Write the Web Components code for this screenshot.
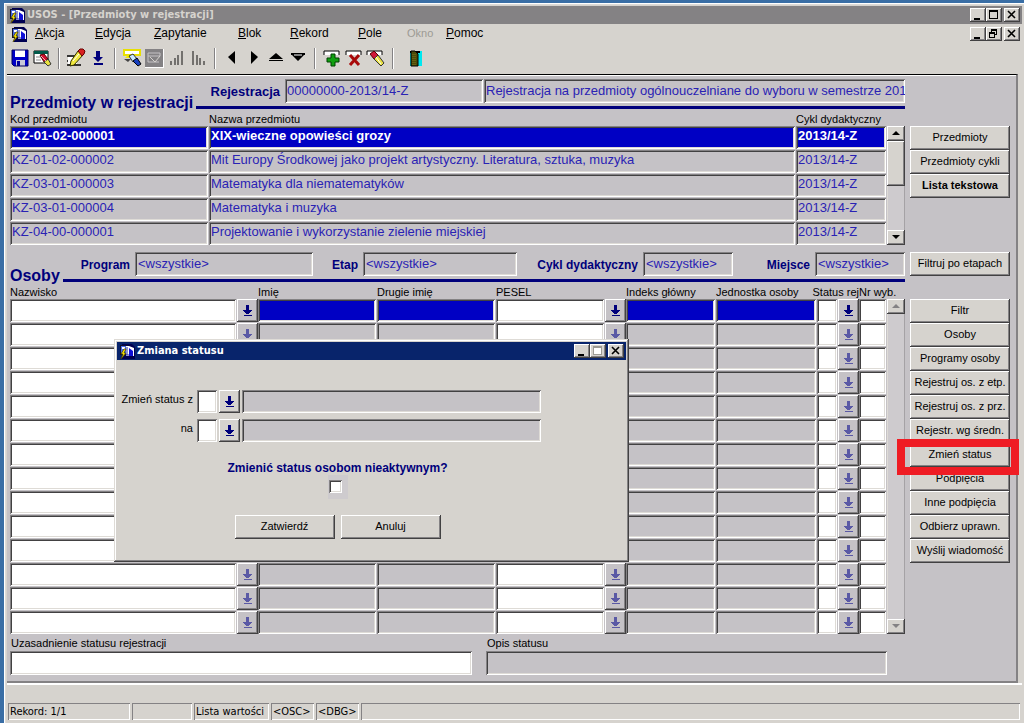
<!DOCTYPE html>
<html lang="pl">
<head>
<meta charset="utf-8">
<title>USOS - [Przedmioty w rejestracji]</title>
<style>
  html { height: 100%; }
  body {
    margin: 0; min-height: 100%; display: flex; background: #3a6ea5;
    font: 11px/14px "Liberation Sans", Arial, sans-serif; color: #000;
    --face: #d6d3ce; --panel: #c5c2c6; --navy: #00007b; --ink: #2a22b4; --pick: #0000c4;
    --ui: "DejaVu Sans Condensed", "DejaVu Sans", sans-serif;
  }
</style>
</head>
<body>
<usos-window></usos-window>

<script>
const SUNK = 'box-shadow: inset 1px 1px #848284, inset -1px -1px #fff, inset 2px 2px #424142, inset -2px -2px #dedbd6;';
const RAISED = 'box-shadow: inset -1px -1px #424142, inset 1px 1px #fff, inset -2px -2px #848284;';

const define = (name, render) => customElements.define(name, class extends HTMLElement {
  connectedCallback() {
    if (this.shadowRoot) return;
    this.attachShadow({ mode: 'open' }).innerHTML =
      '<style>*{box-sizing:border-box} :host{display:block;box-sizing:border-box} button{font:inherit;color:inherit;margin:0;padding:0;border:0;background:none} svg{display:block}</style>' + render(this);
  }
});
const attr = (el, n, d = '') => el.getAttribute(n) ?? d;

/* application glyph: a form window with a lightning bolt */
define('app-icon', () => `
  <style>:host{width:17px;height:17px;flex:none}</style>
  <svg width="17" height="17" viewBox="0 0 17 17" aria-hidden="true">
    <path d="M3 1h10l3 3v12H3z" fill="#000052"/><path d="M1 2h8v10H1z" fill="#101030"/>
    <path d="M2 3h6v8H2z" fill="#4a6ae0"/><path d="M7 3h3l5 2v8H7z" fill="#fff"/>
    <path d="M10 5l4 3v5h-4z" fill="#1010d8"/><path d="M8 4v8M7 12h3" stroke="#2028a0"/>
    <path d="M3 4h3v2H3z" fill="#fff"/>
    <path d="M5 6 2 11h2l-2 5 5-6H5l2-4z" fill="#ffe800" stroke="#403800" stroke-width=".7"/>
  </svg>`);

const CTRL = {
  min: ['Minimalizuj', '<path d="M4 10h6v2H4z" fill="#000"/>'],
  max: ['Maksymalizuj', '<path d="M3 2h9v9H3z M4 4v6h7V4z" fill="#000" fill-rule="evenodd"/>'],
  maxoff: ['Maksymalizuj', '<path d="M4 3h8v8H4z" fill="#fff"/><path d="M3 2h9v9H3z M4 4v6h7V4z" fill="#9c9a94" fill-rule="evenodd"/>'],
  restore: ['Przywróć', '<path d="M5 2h6v6H9V7h1V4H6v1H5z M3 5h6v6H3z M4 7v3h4V7z" fill="#000" fill-rule="evenodd"/>'],
  close: ['Zamknij', '<path d="M4 3l7 7M11 3l-7 7" stroke="#000" stroke-width="1.6"/>']
};
define('window-controls', el => `
  <style>:host{display:flex;flex:none} button{width:16px;height:14px;background:var(--face);${RAISED}} button:last-child{margin-left:2px}</style>
  ${attr(el, 'kinds').split(' ').map(k => `<button type="button" aria-label="${CTRL[k][0]}"><svg width="16" height="14" viewBox="0 0 16 14">${CTRL[k][1]}</svg></button>`).join('')}`);

define('title-bar', el => `
  <style>
    :host{display:flex;align-items:center;height:18px;padding:0 2px;gap:1px;background:var(--bar,#848284);color:var(--bar-ink,#d6d3ce)}
    h1{margin:0;flex:1;font:bold 11px/16px var(--ui);white-space:nowrap}
  </style>
  <app-icon></app-icon><h1>${attr(el, 'text')}</h1><window-controls kinds="${attr(el, 'kinds')}"></window-controls>`);

define('menu-bar', () => `
  <style>
    :host{display:flex;align-items:center;height:20px;padding:0 2px 0 4px}
    nav{flex:1;display:grid;grid-template-columns:60px 59px 84px 52px 68px 49px 39px auto;margin-left:7px;font-size:12px;line-height:18px;padding-bottom:2px}
    button{text-align:left;justify-self:start} button:disabled{color:#9c9a94;font-size:11px}
  </style>
  <app-icon></app-icon>
  <nav>${['Akcja', 'Edycja', 'Zapytanie', 'Blok', 'Rekord', 'Pole', 'Okno', 'Pomoc'].map(t =>
    t === 'Okno' ? `<button type="button" disabled>${t}</button>` : `<button type="button"><u>${t[0]}</u>${t.slice(1)}</button>`).join('')}</nav>
  <window-controls kinds="min restore close"></window-controls>`);

const TOOLS = {
  save: ['Zapisz', '<path d="M2 2h16v16H4l-2-2z" fill="#0000c8"/><path d="M5 2h10v7H5z" fill="#fff"/><path d="M6 12h9v6H6z" fill="#c8c8d8"/><path d="M7 13h3v5H7z" fill="#0000a0"/><path d="M2 2h16v16H4l-2-2z" fill="none" stroke="#000060"/>'],
  clear: ['Wyczyść formularz', '<path d="M2 3h14v12H2z" fill="#fff" stroke="#000"/><path d="M2 3h14v3H2z" fill="#005a4a"/><path d="M4 9h8M4 12h5" stroke="#888"/><path d="M8 7l4-1 4 5-4 3z" fill="#d01030" stroke="#500"/><path d="M12 14l4-3 3 5-3 2z" fill="#e8e040" stroke="#333"/><path d="M9 8l5 5" stroke="#f8b0b8"/>'],
  edit: ['Edytuj', '<path d="M1 8h9M1 17h14M1 13h4" stroke="#000" stroke-width="1.5"/><path d="M2 9h9v7H2z" fill="#fff"/><path d="M12 3l5 4-9 10-4 1 1-5z" fill="#f0e840" stroke="#303000"/><path d="M12 3l2-2h3l2 2-1 3-2 2z" fill="#d82020" stroke="#600"/><path d="M7 13l6-7" stroke="#fff"/>'],
  list: ['Lista wartości', '<path d="M8 3h4v6h3l-5 5-5-5h3zM6 15h9v2H6z" fill="#00007b"/>'],
  query: ['Wprowadź zapytanie', '<path d="M2 2h16v5H2z" fill="#fff" stroke="#e8e000" stroke-width="2"/><path d="M2 11h7l-3 3z" fill="#444"/><path d="M3 10h6l-1-3h-2" fill="#f0e800"/><path d="M7 8l4-2 4 5-4 3z" fill="#c8e8ff" stroke="#333"/><path d="M11 13l4-3 4 6-3 2z" fill="#1840c0" stroke="#000"/>'],
  run: ['Wykonaj zapytanie', '<path d="M1 1h19v19H1z" fill="#fff"/><path d="M1 1h18v18H1z" fill="#848284"/><path d="M4 5h12v3H4zM4 8v6h11" fill="none" stroke="#c6c3c6"/><path d="M6 9l5 5 5-6" fill="none" stroke="#d6d3ce"/>', 1],
  asc: ['Sortuj rosnąco', '<path d="M5 13v4M9 10v7M12 7v10M16 3v14" stroke="#73716e" stroke-width="2"/>', 1],
  desc: ['Sortuj malejąco', '<path d="M5 3v14M9 7v10M12 10v7M16 13v4" stroke="#73716e" stroke-width="2"/>', 1],
  prevb: ['Poprzedni blok', '<path d="M13 3v13L6 9z" fill="#000"/>'],
  nextb: ['Następny blok', '<path d="M7 3v13l7-7z" fill="#000"/>'],
  prev: ['Poprzedni rekord', '<path d="M3 11h14l-7-6zM3 12h14v1H3z" fill="#000"/>'],
  next: ['Następny rekord', '<path d="M3 5h14v2h-1l-6 6-6-6H3z" fill="#000"/><path d="M6 7h8" stroke="#fff"/>'],
  add: ['Wstaw rekord', '<path d="M2 3h15v4H2z" fill="#fff"/><path d="M2 7V3h15v4" fill="none" stroke="#000"/><path d="M9 6h4v4h4v4h-4v4H9v-4H5v-4h4z" fill="#10a010" stroke="#004000"/>'],
  del: ['Usuń rekord', '<path d="M2 3h15v4H2z" fill="#fff"/><path d="M2 7V3h15v4" fill="none" stroke="#000"/><path d="M6 7l9 10M15 7L6 17" stroke="#a80808" stroke-width="3"/>'],
  wipe: ['Wyczyść rekord', '<path d="M1 3h15v4H1z" fill="#fff"/><path d="M1 7V3h15v4" fill="none" stroke="#000"/><path d="M4 6l4-3 4 4-4 4z" fill="#d01838" stroke="#500"/><path d="M8 11l4-4 6 8-3 3z" fill="#e8e040" stroke="#333"/><path d="M10 9l5 7" stroke="#fff"/>'],
  exit: ['Wyjście', '<path d="M4 3h12v15H4z" fill="#00e8f0"/><path d="M4 3h10v2H4z" fill="#000"/><path d="M5 3h4l3 3v12H5z" fill="#4a4a08" stroke="#000"/><path d="M7 6v12M9 6v12" stroke="#807820" stroke-dasharray="1 1"/>']
};
define('tool-bar', el => `
  <style>
    :host{display:flex;align-items:center;height:30px;padding:0 0 2px 2px}
    div{display:flex} button{width:22px;height:22px;display:grid;place-items:center}
    i{width:2px;height:21px;margin:0 5px;background:#848284;border-right:1px solid #fff}
    div:last-child{padding-left:6px}
  </style>
  ${[['save', 'clear'], ['edit', 'list'], ['query', 'run', 'asc', 'desc'], ['prevb', 'nextb', 'prev', 'next'], ['add', 'del', 'wipe'], ['exit']]
    .map(g => `<div>${g.map(k => `<button type="button" aria-label="${TOOLS[k][0]}"${TOOLS[k][2] ? ' disabled' : ''}><svg width="20" height="20" viewBox="0 0 20 20">${TOOLS[k][1]}</svg></button>`).join('')}</div>`).join('<i></i>')}`);

define('push-button', el => `
  <style>
    :host{position:relative}
    button{display:block;width:100%;height:24px;padding-bottom:2px;background:var(--face);${RAISED}}
    :host([strong]) button{font-weight:bold}
    :host([marked])::after{content:"";position:absolute;z-index:1;inset:-4px -9px -8px -13px;border:8px solid #ef1c24}
  </style><button type="button"><slot></slot></button>`);

define('lov-button', el => `
  <style>
    button{display:grid;place-items:center;width:21px;height:100%;min-height:23px;background:var(--lov,var(--panel));${RAISED} fill:var(--navy)}
    :host([off]) svg{fill:#5a59a5}
  </style><button type="button" aria-label="Lista wartości"><svg width="9" height="12" viewBox="0 0 9 12" shape-rendering="crispEdges"><path d="M3 0h3v5h3v1H8v1H7v1H6v1H3V8H2V7H1V6H0V5h3zM1 10h8v1H1z"/></svg></button>`);

define('scroll-bar', el => `
  <style>
    :host{display:flex;flex-direction:column;width:18px;background:#cecbce;box-shadow:inset 1px 0 #dedbd6,inset -1px 0 #a5a2a5}
    button{width:18px;height:15px;background:var(--face);display:grid;place-items:center;${RAISED}}
    div{flex:1} b{display:block;height:45px;background:var(--face);${RAISED}}
    svg{fill:#000} :host([off]) svg{fill:#848284}
  </style>
  <button type="button" aria-label="W górę"><svg width="8" height="5" viewBox="0 0 8 5"><path d="M0 4h8L4 0z"/></svg></button>
  <div>${el.hasAttribute('off') ? '' : '<b></b>'}</div>
  <button type="button" aria-label="W dół"><svg width="8" height="5" viewBox="0 0 8 5"><path d="M0 0h8L4 4z"/></svg></button>`);

define('form-field', el => `
  <style>
    :host{display:flex;gap:5px;align-items:center;justify-content:flex-end}
    label{font-weight:bold;color:var(--navy);font-size:12px;white-space:nowrap;padding-top:2px}
    :host([big]) label{font-size:13px}
    input{width:var(--w,100%);height:24px;min-width:0;border:0;border-radius:0;margin:0;padding:0 2px 2px 3px;background:var(--panel);color:var(--ink);font:13px/18px "Liberation Sans",Arial,sans-serif;${SUNK}}
    :host([big]) input{padding:0 0 2px 2px}
    :host([stack]){flex-direction:column;align-items:stretch;gap:1px}
    :host([stack]) label{font-size:11px;font-weight:normal;color:#000;padding:0 1px}
    :host([white]) input{background:#fff}
  </style>
  ${attr(el, 'label') ? `<label for="f">${attr(el, 'label')}</label>` : ''}<input id="f" value="${attr(el, 'value')}" ${attr(el, 'label') ? '' : 'aria-label="Opis rejestracji"'} ${el.hasAttribute('white') ? '' : 'readonly'}>`);

define('section-title', () => `
  <style>
    :host{display:flex;align-items:flex-end;gap:3px;margin-top:-9px}
    h2{margin:0;font-size:16px;line-height:18px;color:var(--navy)}
    i{flex:1;height:3px;margin-bottom:3px;background:var(--navy)}
  </style><h2><slot></slot></h2><i></i>`);

const TABLE = `
  :host{display:flex;min-width:0}
  table{flex:1;min-width:0;table-layout:fixed;border-collapse:collapse;width:100%}
  th{height:14px;padding:0;font-weight:normal;text-align:left;white-space:nowrap;line-height:14px}
  td{height:24px;padding:0 1px 1px 0}
  scroll-bar{margin:14px 0 1px}`;

define('course-table', () => `
  <style>${TABLE}
    td>div{height:23px;padding-left:2px;font-size:13px;line-height:20px;color:var(--ink);white-space:nowrap;overflow:hidden;${SUNK}}
    tr[aria-selected] div{background:var(--pick);color:#fff;font-weight:bold}
  </style>
  <table><colgroup><col style="width:199px"><col><col style="width:91px"></colgroup>
  <thead><tr><th>Kod przedmiotu</th><th>Nazwa przedmiotu</th><th>Cykl dydaktyczny</th></tr></thead>
  <tbody>${[
    ['KZ-01-02-000001', 'XIX-wieczne opowieści grozy'],
    ['KZ-01-02-000002', 'Mit Europy Środkowej jako projekt artystyczny. Literatura, sztuka, muzyka'],
    ['KZ-03-01-000003', 'Matematyka dla niematematyków'],
    ['KZ-03-01-000004', 'Matematyka i muzyka'],
    ['KZ-04-00-000001', 'Projektowanie i wykorzystanie zielenie miejskiej']
  ].map((r, i) => `<tr${i ? '' : ' aria-selected="true"'}>${[...r, '2013/14-Z'].map(c => `<td><div>${c}</div></td>`).join('')}</tr>`).join('')}</tbody></table>
  <scroll-bar></scroll-bar>`);

const PERSON = [
  ['Nazwisko', 'w'], ['', 'l'], ['Imię', 'g'], ['Drugie imię', 'g'], ['PESEL', 'w'], ['', 'l'],
  ['Indeks główny', 'g'], ['Jednostka osoby', 'g'], ['Status rej', 'w'], ['', 'l'], ['Nr wyb.', 'w']
];
define('people-table', () => `
  <style>${TABLE}
    input{display:block;width:100%;height:23px;border:0;border-radius:0;margin:0;padding:0 3px;font:inherit;background:#fff;${SUNK}}
    input[readonly]{background:var(--panel)}
    tr:first-child input[readonly]{background:var(--pick)}
    .end{display:flex;justify-content:flex-end}
  </style>
  <table><colgroup><col>${[21, 119, 119, 109, 21, 90, 101, 21, 21, 28].map(w => `<col style="width:${w}px">`).join('')}</colgroup>
  <thead><tr>${PERSON.map(([t], i) => i === 8 ? `<th colspan="2"><div class="end">${t}</div></th>` : i === 9 ? '' : `<th>${t}</th>`).join('')}</tr></thead>
  <tbody>${Array.from({ length: 14 }, (_, r) => `<tr>${PERSON.map(([t, k]) =>
    k === 'l' ? `<td><lov-button${r ? ' off' : ''}></lov-button></td>` : `<td><input aria-label="${t}"${k === 'g' ? ' readonly' : ''}></td>`).join('')}</tr>`).join('')}</tbody></table>
  <scroll-bar off></scroll-bar>`);

define('status-dialog', () => `
  <style>
    :host{background:var(--face);padding:3px;width:515px;--bar:#08246b;--bar-ink:#fff;box-shadow:inset -1px -1px #424142,inset 1px 1px #dedbd6,inset -2px -2px #848284,inset 2px 2px #fff}
    form{display:flex;flex-direction:column;align-items:center;padding:30px 0 20px}
    .row{display:grid;grid-template-columns:78px 20px 21px 299px;gap:2px;align-self:flex-start;margin-bottom:6px;--lov:var(--face)}
    .row label{text-align:right;padding:2px 2px 0 0;white-space:nowrap}
    .row input{width:100%;height:23px;border:0;border-radius:0;margin:0;padding:0 2px;background:#fff;${SUNK}}
    .row input[readonly]{background:var(--panel)}
    .center{display:flex;flex-direction:column;align-items:center;padding-right:68px}
    .ask{font-weight:bold;color:var(--navy);font-size:12px;margin-top:13px;line-height:14px}
    .tick{width:20px;height:24px;padding:5px 0 0 1px;background:#cecbce}
    .tick input{appearance:none;display:block;margin:0;width:13px;height:13px;background:#fff;${SUNK}}
    .btns{display:grid;grid-template-columns:100px 100px;gap:6px;margin-top:16px}
  </style>
  <title-bar text="Zmiana statusu" kinds="min maxoff close"></title-bar>
  <form>
    <div class="row"><label for="a">Zmień status z</label><input id="a"><lov-button></lov-button><input readonly aria-label="Opis statusu początkowego"></div>
    <div class="row"><label for="b">na</label><input id="b"><lov-button></lov-button><input readonly aria-label="Opis statusu docelowego"></div>
    <div class="center">
      <label class="ask" for="c">Zmienić status osobom nieaktywnym?</label>
      <span class="tick"><input id="c" type="checkbox"></span>
      <div class="btns"><push-button>Zatwierdź</push-button><push-button>Anuluj</push-button></div>
    </div>
  </form>`);

define('status-bar', () => `
  <style>
    :host{background:var(--face);padding:18px 2px 3px 1px;border-top:2px solid #fff;border-bottom:1px solid #848284}
    div{display:grid;grid-template-columns:122px 60px 75px 43px 43px 1fr;gap:2px}
    span{height:17px;padding-left:2px;font:11px/17px var(--ui);white-space:nowrap;overflow:hidden;box-shadow:inset 1px 1px #848284,inset -1px -1px #fff}
  </style>
  <div role="status"><span>Rekord: 1/1</span><span></span><span>Lista wartości</span><span>&lt;OSC&gt;</span><span>&lt;DBG&gt;</span><span></span></div>`);

define('usos-window', () => `
  <style>
    :host{position:relative;flex:1;display:flex;flex-direction:column;margin:3px 0 0 4px;padding:3px 2px 0 3px;background:var(--face);box-shadow:inset 1px 1px #fff,inset 2px 2px #dedbd6}
    main{position:relative;flex:1;background:var(--panel);margin-right:4px;padding:4px 6px 6px 3px;border-top:1px solid #000;border-right:2px solid #848284;border-bottom:2px solid #848284;box-shadow:inset 0 1px #fff}
    .band{display:grid;grid-template-columns:minmax(0,1fr) 100px;column-gap:5px}
    .band+.band{margin-top:6px}
    .reg{display:grid;grid-template-columns:473px minmax(0,1fr);column-gap:1px}
    .reg form-field:first-child{--w:198px}
    .side{padding-top:47px}
    .actions{padding-top:23px}
    .filters{display:grid;grid-template-columns:303fr 204fr 216fr 172fr}
    .filters form-field{--w:90px} .filters .p{--w:178px} .filters .e{--w:154px}
    .notes{display:grid;grid-template-columns:462fr 401fr 4px;column-gap:14px;padding-top:1px}
    status-dialog{position:absolute;left:107px;top:264px;z-index:2}
  </style>
  <title-bar text="USOS - [Przedmioty w rejestracji]" kinds="min max close"></title-bar>
  <menu-bar></menu-bar>
  <tool-bar></tool-bar>
  <main>
    <section class="band">
      <div>
        <div class="reg"><form-field big label="Rejestracja" value="00000000-2013/14-Z"></form-field><form-field big value="Rejestracja na przedmioty ogólnouczelniane do wyboru w semestrze 201"></form-field></div>
        <section-title>Przedmioty w rejestracji</section-title>
        <course-table></course-table>
      </div>
      <div class="side"><push-button>Przedmioty</push-button><push-button>Przedmioty cykli</push-button><push-button strong>Lista tekstowa</push-button></div>
    </section>
    <section class="band">
      <div>
        <div class="filters"><form-field class="p" label="Program" value="&lt;wszystkie&gt;"></form-field><form-field class="e" label="Etap" value="&lt;wszystkie&gt;"></form-field><form-field label="Cykl dydaktyczny" value="&lt;wszystkie&gt;"></form-field><form-field label="Miejsce" value="&lt;wszystkie&gt;"></form-field></div>
        <section-title>Osoby</section-title>
        <people-table></people-table>
        <div class="notes"><form-field stack white label="Uzasadnienie statusu rejestracji"></form-field><form-field stack label="Opis statusu"></form-field></div>
      </div>
      <div>
        <push-button>Filtruj po etapach</push-button>
        <div class="actions"><push-button>Filtr</push-button><push-button>Osoby</push-button><push-button>Programy osoby</push-button><push-button>Rejestruj os. z etp.</push-button><push-button>Rejestruj os. z prz.</push-button><push-button>Rejestr. wg średn.</push-button><push-button marked>Zmień status</push-button><push-button>Podpięcia</push-button><push-button>Inne podpięcia</push-button><push-button>Odbierz uprawn.</push-button><push-button>Wyślij wiadomość</push-button></div>
      </div>
    </section>
    <status-dialog></status-dialog>
  </main>
  <status-bar></status-bar>`);
</script>
</body>
</html>
